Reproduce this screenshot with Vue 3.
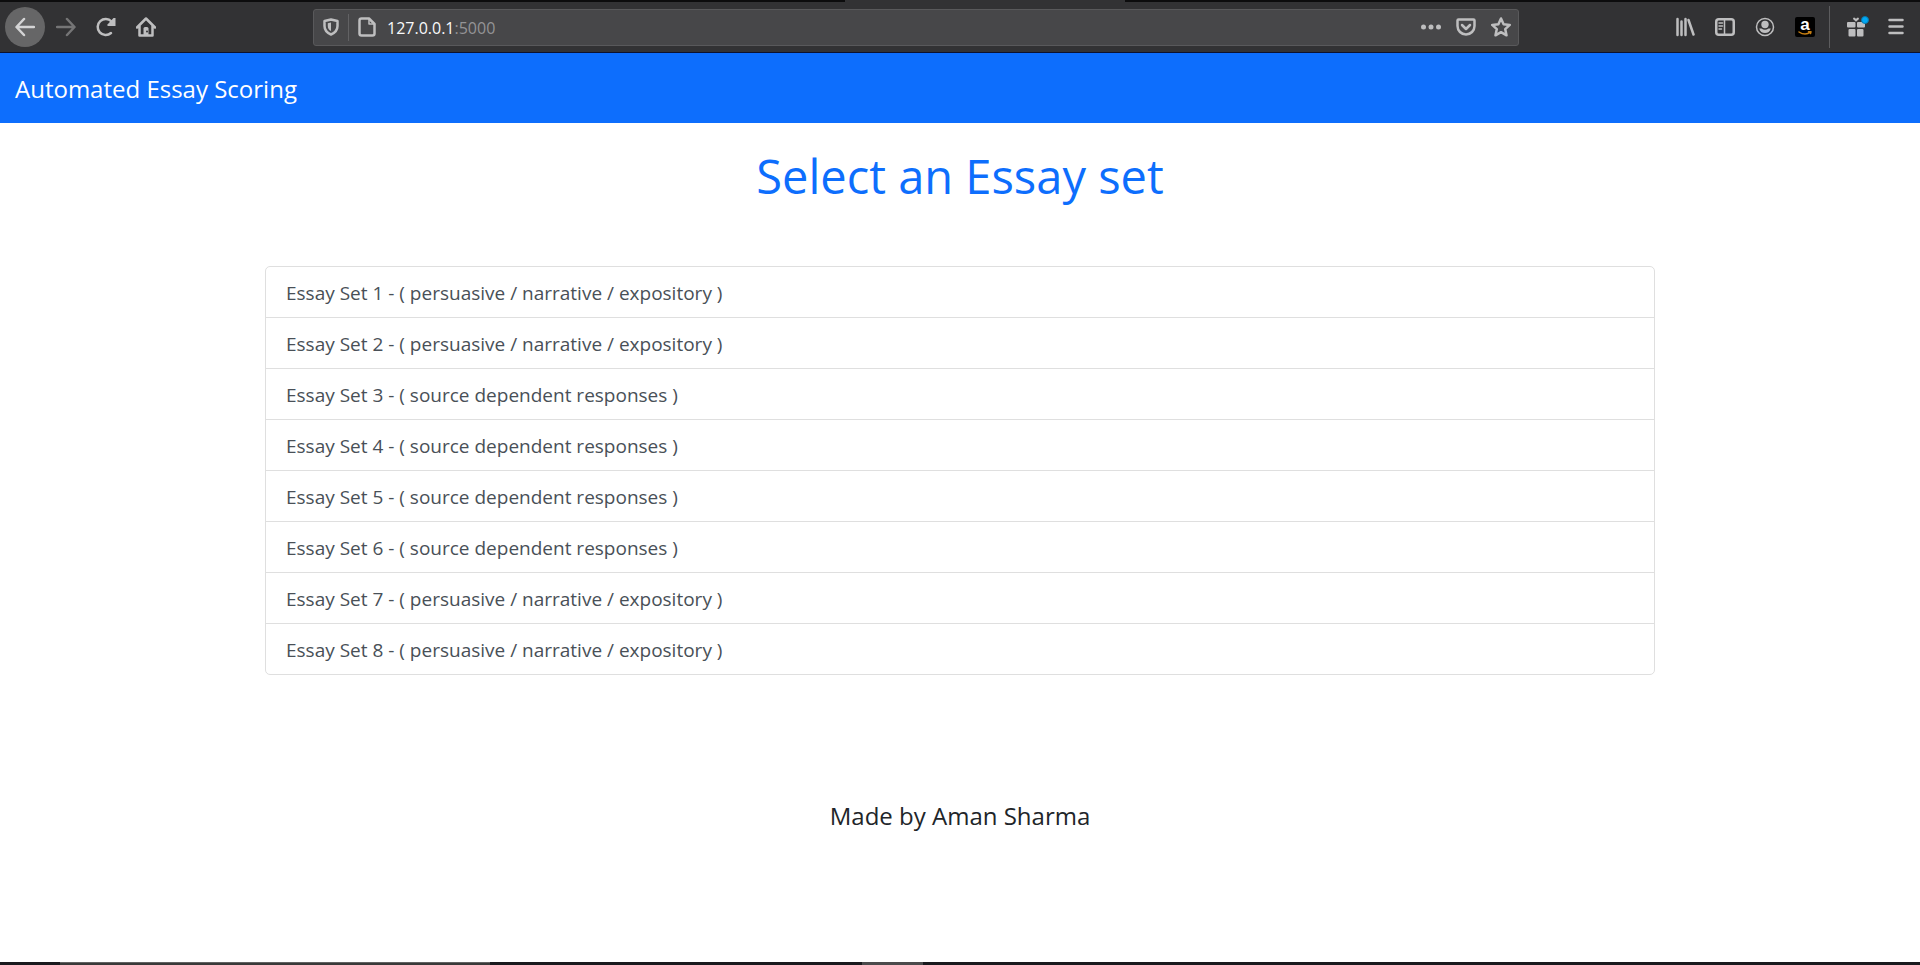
<script setup>
const persuasive = 'persuasive / narrative / expository'
const source = 'source dependent responses'
const essaySets = [persuasive, persuasive, source, source, source, source, persuasive, persuasive]
  .map((kind, i) => ({ id: i + 1, kind }))
</script>

<template>
  <div class="window">
    <header class="toolbar">
      <span class="active-tab"></span>
      <button class="tool back" aria-label="Back">
        <svg width="20" height="20" viewBox="0 0 20 20"><path d="M19 10H2M9 2L1.5 10L9 18" /></svg>
      </button>
      <button class="tool dim" aria-label="Forward">
        <svg width="20" height="20" viewBox="0 0 20 20"><path d="M1 10H18M11 2L18.500 10L11 18" /></svg>
      </button>
      <button class="tool" aria-label="Reload">
        <svg width="20" height="20" viewBox="0 0 20 20"><path d="M15 16A8 8 0 1 1 15.500 4.500" /><path class="solid" d="M19.500 1V9H11.500V7.500L17.500 1Z" /></svg>
      </button>
      <button class="tool" aria-label="Home">
        <svg width="20" height="20" viewBox="0 0 20 20"><path d="M1 10.500L10 1.500L19 10.500M3.500 9V18.500H16.500V9" /><path class="solid" d="M7.500 19V11.500Q7.500 10 9 10H11Q12.500 10 12.500 11.500V19Z" /><circle class="hole" cx="11" cy="14.500" r="1" /></svg>
      </button>
      <span class="spacer"></span>
      <div class="urlbar">
        <button class="inner shield" aria-label="Tracking protection">
          <svg width="16" height="18" viewBox="0 0 16 18"><path d="M8 1.500L14.500 3V8C14.500 12.500 11.500 15 8 16.500C4.500 15 1.500 12.500 1.500 8V3Z" /><path class="solid" d="M8 4.500V13C6 12 4.800 10.500 4.800 8V5.200Z" /></svg>
        </button>
        <button class="inner page" aria-label="Site information">
          <svg width="18" height="20" viewBox="0 0 18 20"><path d="M3.500 1.500H11L16.500 7V16.500Q16.500 18.500 14.500 18.500H3.500Q1.500 18.500 1.500 16.500V3.500Q1.500 1.500 3.500 1.500Z" /><path class="thin" d="M11 2V7H16.500" /></svg>
        </button>
        <a class="address" href="#">127.0.0.1<span>:5000</span></a>
        <button class="inner" aria-label="Page actions">
          <svg width="22" height="20" viewBox="0 0 22 20"><g class="solid"><circle cx="3.500" cy="10" r="2.500" /><circle cx="11" cy="10" r="2.500" /><circle cx="18.500" cy="10" r="2.500" /></g></svg>
        </button>
        <button class="inner" aria-label="Save to Pocket">
          <svg width="20" height="20" viewBox="0 0 20 20"><path d="M2.500 2.500H17.500Q18.500 2.500 18.500 3.500V9A8.500 8.500 0 0 1 1.500 9V3.500Q1.500 2.500 2.500 2.500Z" /><path d="M6 8L10 12L14 8" /></svg>
        </button>
        <button class="inner" aria-label="Bookmark this page">
          <svg width="20" height="20" viewBox="0 0 20 20"><path d="M10 1.500L12.600 7.200L18.800 7.900L14.200 12.100L15.500 18.300L10 15.200L4.500 18.300L5.800 12.100L1.200 7.900L7.400 7.200Z" /></svg>
        </button>
      </div>
      <span class="spacer"></span>
      <button class="tool" aria-label="Library">
        <svg width="20" height="20" viewBox="0 0 20 20"><path d="M2.500 2V18M6.500 4.500V18M10.500 2V18M13.500 3L18.500 17.500" /></svg>
      </button>
      <button class="tool" aria-label="Sidebars">
        <svg width="20" height="20" viewBox="0 0 20 20"><rect x="1.250" y="2.250" width="17.500" height="15.500" rx="2.500" /><path class="thin" d="M9.500 3V17M4 6H7.500M4 9H7.500M4 12H6.500" /></svg>
      </button>
      <button class="tool" aria-label="Account">
        <svg width="20" height="20" viewBox="0 0 20 20"><circle class="thin" cx="10" cy="10" r="8.500" /><circle class="solid" cx="10" cy="7.500" r="3.700" /><path class="solid" d="M4.200 11.500H6.500Q10 14 13.500 11.500H15.800Q14.500 16 10 16T4.200 11.500Z" /></svg>
      </button>
      <button class="tool" aria-label="Amazon">
        <svg class="shop" width="20" height="20" viewBox="0 0 20 20"><rect class="amazon" width="20" height="20" rx="2" /><text x="10" y="13" text-anchor="middle">a</text><path class="smile" d="M4 15Q10 19 15.500 15.200M13.500 14.700L16 14.700L15.500 16.500" /></svg>
      </button>
      <span class="divider"></span>
      <button class="tool gift" aria-label="What's new">
        <svg width="26" height="22" viewBox="-3 0 26 22"><g class="solid"><rect x="1" y="6" width="8.500" height="5.500" rx="1" /><rect x="11" y="6" width="8" height="5.500" rx="1" /><rect x="2.500" y="13" width="7" height="7.500" rx="1" /><rect x="11" y="13" width="6.500" height="7.500" rx="1" /><path d="M10 5.800L7.200 3.300Q6.500 1.500 8.200 1.500L10 2.800L11.800 1.500Q13.500 1.500 12.800 3.300Z" /></g><circle class="dot" cx="19" cy="4" r="3.500" /></svg>
      </button>
      <button class="tool" aria-label="Open menu">
        <svg width="16" height="20" viewBox="0 0 16 20"><path d="M1.500 3H14.500M1.500 9.500H14.500M1.500 16H14.500" /></svg>
      </button>
    </header>

    <nav class="navbar"><a href="#">Automated Essay Scoring</a></nav>

    <main>
      <h1>Select an Essay set</h1>
      <div class="list">
        <a v-for="set in essaySets" :key="set.id" href="#">Essay Set {{ set.id }} - ( {{ set.kind }} )</a>
      </div>
      <p class="credit">Made by Aman Sharma</p>
    </main>

    <footer class="taskbar"><span class="task search"></span><span class="task running"></span></footer>
  </div>
</template>

<style>
body { margin: 0; background: #fff; }
</style>

<style scoped>
* { box-sizing: border-box; }
.window {
  min-height: 100vh;
  display: flex;
  flex-direction: column;
  font-family: "Segoe UI", "Open Sans", "Noto Sans", sans-serif;
}
a { color: inherit; text-decoration: none; }
button { padding: 0; border: 0; background: none; color: inherit; }
svg {
  display: block;
  fill: none;
  stroke: currentColor;
  stroke-width: 2.5;
  stroke-linecap: round;
  stroke-linejoin: round;
}
.solid { fill: currentColor; stroke: none; }
.thin { stroke-width: 1.5; }
.hole { fill: #323234; stroke: none; }
.toolbar {
  position: relative;
  display: flex;
  align-items: center;
  height: 53px;
  border-top: 2px solid #0c0c0d;
  border-bottom: 1px solid #0b1230;
  padding: 0 4px 0 5px;
  background: #323234;
  color: #bebebf;
}
.active-tab {
  position: absolute;
  top: -2px;
  left: 44%;
  width: 280px;
  height: 2px;
  background: #323234;
}
.tool {
  display: flex;
  flex: none;
  align-items: center;
  justify-content: center;
  width: 40px;
  height: 40px;
}
.back { margin-right: 1px; border-radius: 50%; background: #666667; color: #d4d4d5; }
.dim { color: #757576; }
.spacer { flex: 0 1 146px; }
.urlbar {
  display: flex;
  flex: 1;
  align-items: center;
  height: 37px;
  margin-left: 1px;
  border: 1px solid #59595b;
  border-radius: 3px;
  background: #474749;
}
.inner {
  display: flex;
  flex: none;
  align-items: center;
  justify-content: center;
  width: 35px;
  height: 27px;
}
.shield { border-right: 1px solid #626264; }
.address {
  flex: 1;
  padding: 2px 0 0 3px;
  color: #f9f9fa;
  font-size: 16px;
  line-height: 24px;
}
.address span { color: #949496; }
.divider { width: 1px; height: 42px; margin: 0 6px 0 4px; background: #5c5c5e; }
.shop { overflow: visible; }
.amazon { fill: #000; stroke: none; }
.smile { stroke: #c77f12; stroke-width: 1.5; }
svg text { fill: #fff; stroke: none; font: bold 17px "Liberation Sans", Arial, sans-serif; }
.dot { fill: #00a8f5; stroke: #087aad; stroke-width: 1; }
.navbar {
  display: flex;
  align-items: center;
  height: 70px;
  padding: 2px 15px 0;
  background: #0d6efd;
  color: #fff;
  font-size: 24px;
  line-height: 38px;
}
main { padding: 0 16px; text-align: center; }
h1 {
  margin: 23px 0 60px;
  color: #0d6efd;
  font-size: 47px;
  font-weight: 400;
  line-height: 60px;
}
.list {
  max-width: 1390px;
  margin: 0 auto;
  border: 1px solid #dfdfdf;
  border-radius: 5px;
  text-align: left;
}
.list a {
  display: block;
  padding: 11px 20px 9px;
  color: #495057;
  font-size: 19px;
  line-height: 30px;
}
.list a + a { border-top: 1px solid #dfdfdf; }
.credit {
  margin: 126px 0 0;
  color: #212529;
  font-size: 24px;
  line-height: 30px;
}
.taskbar { display: flex; height: 3px; margin-top: auto; padding-left: 60px; background: #19191d; }
.task { background: #4b4b4c; }
.search { width: 430px; margin-right: 372px; border-top: 1px solid #626262; background: #393939; }
.running { width: 61px; }
</style>
